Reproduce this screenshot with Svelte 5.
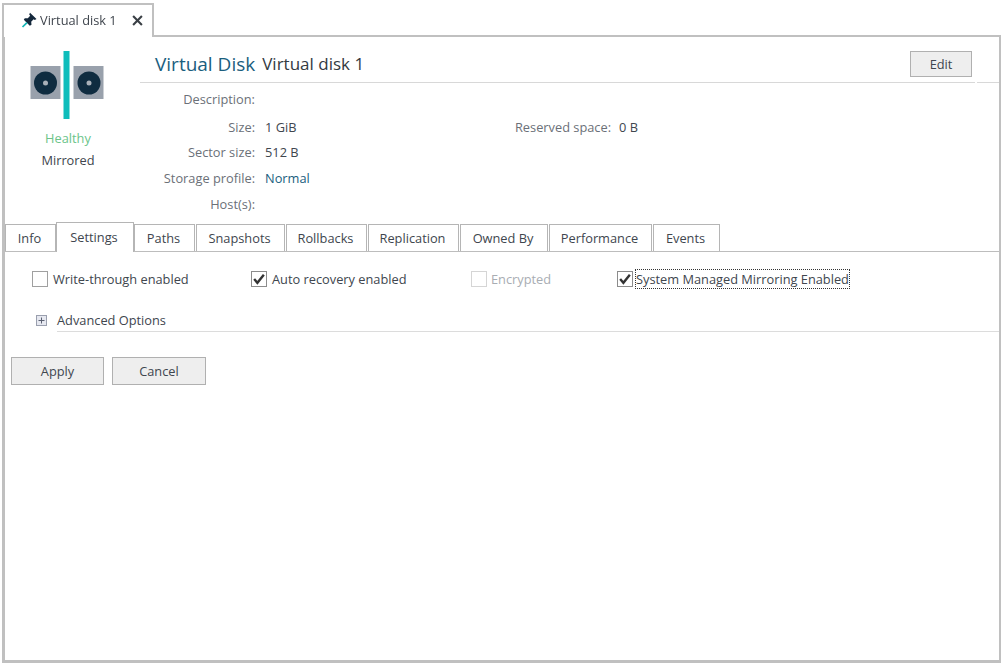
<script>
  const tabs = [
    { label: 'Info', width: 51 },
    { label: 'Settings', width: 78 },
    { label: 'Paths', width: 61 },
    { label: 'Snapshots', width: 89 },
    { label: 'Rollbacks', width: 81 },
    { label: 'Replication', width: 91 },
    { label: 'Owned By', width: 88 },
    { label: 'Performance', width: 103 },
    { label: 'Events', width: 67 }
  ];
  const props = [
    ['Description:', ''],
    ['Size:', '1 GiB'],
    ['Sector size:', '512 B'],
    ['Storage profile:', 'Normal'],
    ['Host(s):', '']
  ];
</script>

<div class="window">
  <div class="docbar">
    <div class="doctab">
      <svg class="pin" width="16" height="16" viewBox="0 0 16 16">
        <path d="M9 0.800 L15.500 7 L13.800 8 L12.600 7.200 L10.200 9.800 L10.500 12.800 L8.800 13.800 L2.800 7.800 L3.800 6.200 L6.800 6.300 L9.200 3.800 L8.200 2.400 Z" fill="#14283c"/>
        <path d="M6 10.600 L1.500 15" stroke="#12b5b5" stroke-width="1.700" fill="none"/>
      </svg>
      <span class="doctitle">Virtual disk 1</span>
      <svg class="close" width="11" height="11" viewBox="0 0 10 10">
        <path d="M1 1 L9 9 M9 1 L1 9" stroke="#3a3f45" stroke-width="1.900"/>
      </svg>
    </div>
  </div>

  <div class="panel">
    <header class="head">
      <div class="status">
        <svg class="disks" width="74" height="70" viewBox="0 0 74 70">
          <rect x="0.500" y="15" width="30" height="33" fill="#99a1ac"/>
          <circle cx="15.500" cy="32" r="11.500" fill="#0f2c40"/>
          <circle cx="15.500" cy="32" r="2.500" fill="#a9b0b8"/>
          <rect x="33.500" y="0" width="6" height="68" fill="#0fbdbb"/>
          <rect x="43.500" y="15" width="30" height="33" fill="#99a1ac"/>
          <circle cx="59" cy="32" r="11.500" fill="#0f2c40"/>
          <circle cx="59" cy="32" r="2.500" fill="#a9b0b8"/>
        </svg>
        <div class="healthy">Healthy</div>
        <div class="mirrored">Mirrored</div>
      </div>
      <div class="info">
        <div class="titlebar">
          <span class="kind">Virtual Disk</span>
          <span class="name">Virtual disk 1</span>
          <button class="btn edit">Edit</button>
        </div>
        <div class="fields">
          <div class="col">
            {#each props as [k, v]}
              <div class="row">
                <span class="key">{k}</span>
                <span class="val" class:link={v === 'Normal'}>{v}</span>
              </div>
            {/each}
          </div>
          <div class="col2">
            <div class="row"></div>
            <div class="row">
              <span class="key wide">Reserved space:</span>
              <span class="val short">0 B</span>
            </div>
          </div>
        </div>
      </div>
    </header>

    <nav class="tabs">
      {#each tabs as t}
        <div class="tab" class:active={t.label === 'Settings'} style:width="{t.width}px">{t.label}</div>
      {/each}
    </nav>

    <section class="settings">
      <div class="checks">
        <label class="check c1"><span class="box"></span>Write-through enabled</label>
        <label class="check c2"><span class="box on"><svg width="14" height="14" viewBox="0 0 13 13"><path d="M2 6.500 L5 10 L11 2.500" fill="none" stroke="#333" stroke-width="2.200"/></svg></span>Auto recovery enabled</label>
        <label class="check c3 disabled"><span class="box"></span>Encrypted</label>
        <label class="check c4"><span class="box on"><svg width="14" height="14" viewBox="0 0 13 13"><path d="M2 6.500 L5 10 L11 2.500" fill="none" stroke="#333" stroke-width="2.200"/></svg></span><span class="focus">System Managed Mirroring Enabled</span></label>
      </div>
      <div class="advanced">
        <span class="plus"><svg width="11" height="11" viewBox="0 0 11 11"><rect x="0.500" y="0.500" width="10" height="10" fill="#e6e8f0" stroke="#9a9fae"/><path d="M2.500 5.500 H8.500 M5.500 2.500 V8.500" stroke="#5b6172"/></svg></span>
        <span class="advlabel">Advanced Options</span>
      </div>
      <div class="actions">
        <button class="btn action apply">Apply</button>
        <button class="btn action">Cancel</button>
      </div>
    </section>
  </div>
</div>

<style>
  :global(body) { margin: 0; background: #fff; }
  .window {
    width: 1002px;
    height: 663px;
    display: flex;
    flex-direction: column;
    box-sizing: border-box;
    padding: 3px 1px 0 2px;
    font-family: "Open Sans", "Noto Sans", sans-serif;
    font-size: 12.8px;
    color: #40464e;
    filter: blur(0.35px);
    overflow: hidden;
  }
  .docbar { height: 33px; display: flex; flex: none; position: relative; z-index: 1; }
  .doctab {
    width: 152px;
    height: 34px;
    box-sizing: border-box;
    border: 2px solid #c0c0c0;
    border-bottom: none;
    background: #fff;
    display: flex;
    align-items: center;
    padding: 0 0 2px 17px;
  }
  .pin { flex: none; }
  .doctitle { margin-left: 3px; width: 92px; white-space: nowrap; }
  .close { flex: none; }
  .panel {
    flex: 1;
    border: 2px solid #c0c0c0;
    border-left-width: 3px;
    border-bottom-width: 3px;
    margin-top: -1px;
    display: flex;
    flex-direction: column;
    min-height: 0;
    background: #fff;
  }
  .head { display: flex; height: 185px; flex: none; }
  .status {
    width: 126px;
    flex: none;
    box-sizing: border-box;
    padding-top: 14px;
    display: flex;
    flex-direction: column;
    align-items: center;
  }
  .disks { flex: none; margin-left: -2px; }
  .healthy { color: #6cc48a; margin-top: 6px; line-height: 22px; }
  .mirrored { color: #40464e; line-height: 22px; }
  .info { flex: 1; display: flex; flex-direction: column; margin-left: 9px; min-width: 0; }
  .titlebar {
    height: 46px;
    box-sizing: border-box;
    border-bottom: 1px solid #d8d8d8;
    display: flex;
    align-items: center;
    padding-top: 8px;
    position: relative;
  }
  .titlebar::after {
    content: "";
    position: absolute;
    right: 22px;
    bottom: -1px;
    width: 2px;
    height: 1px;
    background: #fff;
  }
  .kind { color: #1a5e7e; font-size: 19px; margin-left: 15px; }
  .name { font-size: 17px; color: #333a42; margin-left: 7px; }
  .edit { margin-left: auto; margin-right: 27px; width: 62px; height: 26px; }
  .btn {
    background: #eeeeee;
    border: 1px solid #b0b0b0;
    font: inherit;
    color: #40464e;
    padding: 0;
  }
  .fields { display: flex; margin-top: 3px; }
  .col { width: 300px; flex: none; }
  .row { height: 26px; display: flex; align-items: center; }
  .row:first-child { margin-bottom: 2px; }
  .row:nth-child(2) { margin-bottom: -1px; }
  .key { width: 115px; text-align: right; color: #6b7078; flex: none; white-space: nowrap; }
  .key.wide { width: 171px; }
  .val { margin-left: 10px; color: #40464e; white-space: nowrap; }
  .val.short { margin-left: 8px; }
  .link { color: #1a5e7e; }

  .tabs {
    display: flex;
    flex: none;
    height: 29px;
    align-items: flex-end;
    border-bottom: 1px solid #bdbdbd;
    gap: 1px;
  }
  .tab {
    height: 27px;
    box-sizing: border-box;
    border: 1px solid #b5b5b5;
    border-bottom: none;
    padding-right: 2px;
    display: flex;
    align-items: center;
    justify-content: center;
    background: #fff;
    white-space: nowrap;
  }
  .tab.active { height: 30px; margin: 0 -1px -1px; padding-bottom: 2px; position: relative; z-index: 1; }

  .settings { flex: 1; }
  .checks { display: flex; height: 54px; align-items: center; }
  .check { display: flex; align-items: center; white-space: nowrap; }
  .box {
    width: 16px; height: 16px; box-sizing: border-box;
    border: 1px solid #a0a0a0; background: #fff; margin-right: 5px;
    display: flex; align-items: center; justify-content: center; flex: none;
  }
  .box.on { border-color: #8c8c8c; }
  .c1 { margin-left: 27px; width: 219px; }
  .c2 { width: 220px; }
  .c3 { width: 146px; }
  .c3 .box { margin-right: 4px; }
  .disabled { color: #a8adb3; }
  .disabled .box { border-color: #d5d5d5; }
  .c4 .box { margin-right: 3px; }
  .focus { outline: 1px dotted #333; }
  .advanced { display: flex; align-items: center; height: 23px; margin: 3px 0 0 31px; }
  .plus { width: 21px; display: flex; flex: none; }
  .advlabel { flex: 1; border-bottom: 1px solid #dcdcdc; line-height: 22px; height: 22px; }
  .actions { display: flex; gap: 8px; margin: 25px 0 0 6px; }
  .action { width: 94px; height: 28px; }
  .action.apply { width: 93px; }
</style>
